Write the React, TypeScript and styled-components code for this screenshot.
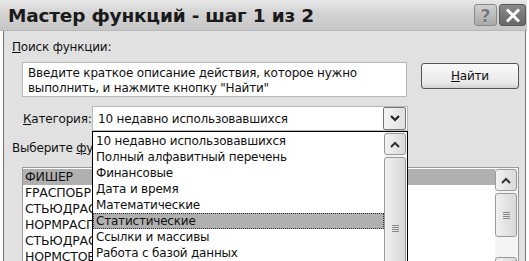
import React from 'react';
import styled, { createGlobalStyle } from 'styled-components';

const GlobalStyle = createGlobalStyle`
  html, body { margin: 0; padding: 0; background: #ffffff; }
  body { font-family: "DejaVu Sans", "Liberation Sans", sans-serif; }
`;

const CATEGORIES = [
  '10 недавно использовавшихся',
  'Полный алфавитный перечень',
  'Финансовые',
  'Дата и время',
  'Математические',
  'Статистические',
  'Ссылки и массивы',
  'Работа с базой данных',
];

const FUNCTIONS = ['ФИШЕР', 'FРАСПОБР', 'СТЬЮДРАСП', 'НОРМРАСП', 'СТЬЮДРАСП', 'НОРМСТОБР'];

const UpArrow = () => (
  <svg width="10" height="7" viewBox="0 0 10 7">
    <polyline points="1,6 5,2 9,6" fill="none" stroke="#333" strokeWidth="2" />
  </svg>
);

export default function App() {
  return (
    <>
      <GlobalStyle />
      <Window>
        <TitleBar>
          <Title>Мастер функций - шаг 1 из 2</Title>
          <CaptionButtons>
            <CaptionButton>?</CaptionButton>
            <CaptionButton dark>
              <svg width="16" height="15" viewBox="0 0 16 15">
                <path d="M2 1.5 L14 13.5 M14 1.5 L2 13.5" stroke="#fff" strokeWidth="3" />
              </svg>
            </CaptionButton>
          </CaptionButtons>
        </TitleBar>
        <Body>
          <Label>
            <u>П</u>оиск функции:
          </Label>
          <SearchRow>
            <SearchBox>
              Введите краткое описание действия, которое нужно
              <br />
              выполнить, и нажмите кнопку "Найти"
            </SearchBox>
            <Button>
              <u>Н</u>айти
            </Button>
          </SearchRow>
          <CategoryRow>
            <FieldLabel>
              <u>К</u>атегория:
            </FieldLabel>
            <ComboWrap>
              <Combo>
                <ComboText>{CATEGORIES[0]}</ComboText>
                <ComboButton>
                  <svg width="10" height="7" viewBox="0 0 10 7">
                    <polyline points="1,1 5,5 9,1" fill="none" stroke="#222" strokeWidth="2.2" />
                  </svg>
                </ComboButton>
              </Combo>
              <DropList>
                <Items>
                  {CATEGORIES.map((c, i) => (
                    <Item key={i} selected={i === 5}>
                      {c}
                    </Item>
                  ))}
                </Items>
                <ScrollBar>
                  <ScrollButton>
                    <UpArrow />
                  </ScrollButton>
                  <Thumb tall>
                    <Grip />
                  </Thumb>
                </ScrollBar>
              </DropList>
            </ComboWrap>
          </CategoryRow>
          <ListLabel>
            Выберите <u>ф</u>ункцию:
          </ListLabel>
          <FuncList>
            <FuncItems>
              {FUNCTIONS.map((f, i) => (
                <FuncItem key={i} selected={i === 0}>
                  {f}
                </FuncItem>
              ))}
            </FuncItems>
            <ScrollBar>
              <ScrollButton>
                <UpArrow />
              </ScrollButton>
              <Thumb>
                <Grip />
              </Thumb>
              <Track />
              <ScrollButton />
            </ScrollBar>
          </FuncList>
        </Body>
      </Window>
    </>
  );
}

const Window = styled.div`
  width: 529px;
  height: 261px;
  overflow: hidden;
  display: flex;
  flex-direction: column;
  background: #ffffff;
`;

const TitleBar = styled.div`
  height: 30px;
  flex: none;
  display: flex;
  align-items: center;
  justify-content: space-between;
  padding: 0 1px 0 8px;
  margin-right: 2px;
  background: linear-gradient(#e8e8e8 0%, #d4d4d4 40%, #c6c6c6 100%);
  border-bottom: 1px solid #b8b8b8;
`;

const Title = styled.div`
  font-family: "DejaVu Sans", sans-serif;
  font-weight: bold;
  font-size: 18.5px;
  color: #1a1a1a;
  letter-spacing: -0.2px;
  margin-top: 1px;
`;

const CaptionButtons = styled.div`
  display: flex;
  gap: 2px;
  align-self: flex-end;
  margin-bottom: 4px;
`;

const CaptionButton = styled.div<{ dark?: boolean }>`
  width: ${(p) => (p.dark ? 25 : 21)}px;
  height: 20px;
  border: 1px solid ${(p) => (p.dark ? '#5a5a5a' : '#8a8a8a')};
  border-radius: 3px;
  background: ${(p) =>
    p.dark ? 'linear-gradient(#8a8a8a, #686868)' : 'linear-gradient(#d0d0d0, #a8a8a8)'};
  display: flex;
  align-items: center;
  justify-content: center;
  font-family: "DejaVu Sans", sans-serif;
  font-weight: bold;
  font-size: 18px;
  color: #777;
  text-shadow: 0 0 1px #fff;
`;

const Body = styled.div`
  flex: 1;
  margin-left: 3px;
  margin-right: 3px;
  border-left: 1px solid #777;
  border-right: 1px solid #777;
  background: #e1e1e1;
  padding: 9px 0 0 8px;
  display: flex;
  flex-direction: column;
  font-size: 12px;
  letter-spacing: -0.2px;
  color: #111;
`;

const Label = styled.div`
  font-size: 12px;
  line-height: 14px;
  white-space: nowrap;
`;

const ListLabel = styled(Label)`
  margin-top: 10px;
`;

const SearchRow = styled.div`
  display: flex;
  align-items: flex-start;
  margin-top: 8px;
  padding-left: 10px;
`;

const SearchBox = styled.div`
  width: 385px;
  height: 35px;
  box-sizing: border-box;
  background: #fff;
  border: 1px solid #b8b8b8;
  padding: 3px 0 0 5px;
  font-size: 12px;
  line-height: 15px;
  white-space: nowrap;
`;

const Button = styled.div`
  margin-left: 14px;
  margin-top: 1px;
  width: 96px;
  height: 24px;
  border: 1px solid #555;
  border-radius: 3px;
  background: linear-gradient(#fafafa, #e8e8e8 80%, #d0d0d0);
  display: flex;
  align-items: center;
  justify-content: center;
  font-size: 12px;
`;

const CategoryRow = styled.div`
  display: flex;
  align-items: center;
  margin-top: 9px;
  padding-left: 11px;
`;

const FieldLabel = styled(Label)`
  width: 69px;
`;

const ComboWrap = styled.div`
  position: relative;
`;

const Combo = styled.div`
  width: 314px;
  height: 23px;
  background: #fff;
  border: 1px solid #b8b8b8;
  display: flex;
  align-items: center;
  justify-content: space-between;
`;

const ComboText = styled.div`
  padding-left: 5px;
  font-size: 12px;
`;

const ComboButton = styled.div`
  width: 21px;
  height: 21px;
  margin-right: 1px;
  border: 1px solid #777;
  border-radius: 2px;
  background: linear-gradient(90deg, #f4f4f4, #e0e0e0);
  display: flex;
  align-items: center;
  justify-content: center;
`;

const DropList = styled.div`
  position: absolute;
  left: 0;
  top: 25px;
  width: 314px;
  height: 140px;
  background: #fff;
  border: 1px solid #000;
  display: flex;
  z-index: 2;
`;

const Items = styled.div`
  flex: 1;
  padding-top: 1px;
`;

const Item = styled.div<{ selected?: boolean }>`
  height: 16px;
  line-height: 16px;
  padding-left: 3px;
  font-size: 12px;
  white-space: nowrap;
  background: ${(p) => (p.selected ? '#b0b0b0' : 'transparent')};
  outline: ${(p) => (p.selected ? '1px dotted #333' : 'none')};
  outline-offset: -1px;
`;

const ScrollBar = styled.div`
  width: 22px;
  background: #f4f4f4;
  display: flex;
  flex-direction: column;
  gap: 2px;
  padding: 1px 1px 0 0;
`;

const ScrollButton = styled.div`
  height: 20px;
  flex: none;
  border: 1px solid #999;
  border-radius: 3px;
  background: linear-gradient(90deg, #f2f2f2, #dadada);
  display: flex;
  align-items: center;
  justify-content: center;
`;

const Thumb = styled.div<{ tall?: boolean }>`
  height: ${(p) => (p.tall ? 140 : 42)}px;
  flex: none;
  border: 1px solid #999;
  border-radius: 3px;
  background: linear-gradient(90deg, #f0f0f0, #d8d8d8);
  display: flex;
  align-items: center;
  justify-content: center;
`;

const Grip = styled.div`
  width: 7px;
  height: 7px;
  background: repeating-linear-gradient(#888 0 1px, transparent 1px 2px);
`;

const Track = styled.div`
  height: 16px;
  flex: none;
`;

const FuncList = styled.div`
  margin: 12px 6px 0 10px;
  height: 100px;
  background: #fff;
  border: 1px solid #999;
  display: flex;
`;

const FuncItems = styled.div`
  flex: 1;
  padding-top: 1px;
`;

const FuncItem = styled.div<{ selected?: boolean }>`
  height: 16px;
  line-height: 16px;
  padding-left: 2px;
  font-size: 12.5px;
  background: ${(p) => (p.selected ? '#b0b0b0' : 'transparent')};
`;
